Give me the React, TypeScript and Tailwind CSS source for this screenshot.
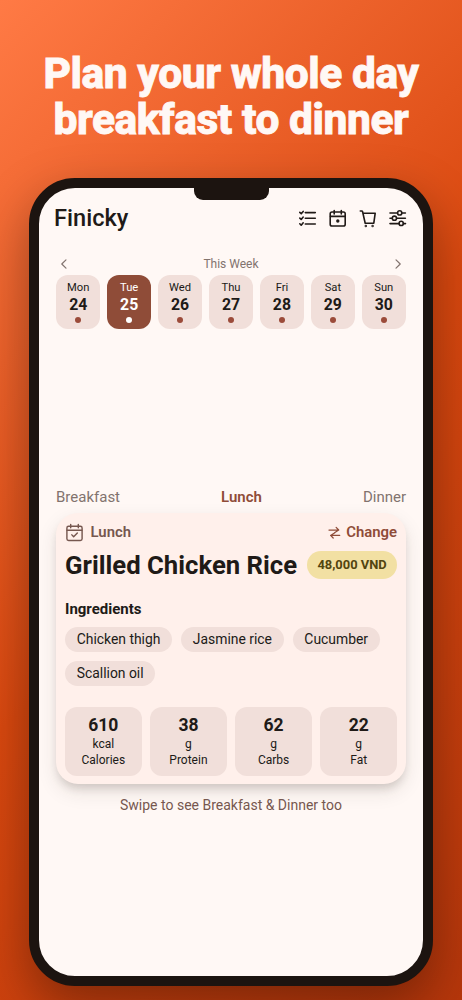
import React from "react";

const days = [
  ["Mon", 24], ["Tue", 25], ["Wed", 26], ["Thu", 27], ["Fri", 28], ["Sat", 29], ["Sun", 30],
] as const;

const nutrients = [
  ["610", "kcal", "Calories"],
  ["38", "g", "Protein"],
  ["62", "g", "Carbs"],
  ["22", "g", "Fat"],
];

const ingredients = ["Chicken thigh", "Jasmine rice", "Cucumber", "Scallion oil"];

function Icon({ size, children, width = 1.6 }: { size: number; width?: number; children: React.ReactNode }) {
  return (
    <svg width={size} height={size} viewBox="0 0 20 20" fill="none" stroke="currentColor" strokeWidth={width} strokeLinecap="round" strokeLinejoin="round" className="shrink-0">
      {children}
    </svg>
  );
}

const Checklist = () => (
  <Icon size={20}>
    <path d="M7.3 4.6h10M7.3 10.3h10M7.3 16h10M1.8 4.4l1.4 1.4 2-2.4M1.8 10.1l1.4 1.4 2-2.4M1.8 15.8l1.4 1.4 2-2.4" />
  </Icon>
);

const Calendar = () => (
  <Icon size={20}>
    <rect x="2.2" y="4" width="15" height="14" rx="1.8" />
    <path d="M2.5 8.4h14.5M6.2 2.6v3.4M13.3 2.6v3.4" />
    <circle cx="9.8" cy="13" r="0.9" fill="currentColor" />
  </Icon>
);

const Cart = () => (
  <Icon size={20}>
    <path d="M2.3 3h1.4q.7 0 .9.8l2.6 11.4h8.6l1.4-10H5" />
    <circle cx="7.8" cy="18" r="0.4" fill="currentColor" />
    <circle cx="14.6" cy="18" r="0.4" fill="currentColor" />
  </Icon>
);

const Sliders = () => (
  <Icon size={20}>
    <path d="M2 5h7.4M14 5h3.4M2 10.3h2.2M8.8 10.3h8.6M2 15.6h8.9M15.5 15.6h2" />
    <circle cx="11.7" cy="4.9" r="2.1" />
    <circle cx="6.4" cy="10.2" r="2.1" />
    <circle cx="13.2" cy="15.4" r="2.1" />
  </Icon>
);

export default function App() {
  return (
    <div className="flex h-[1000px] w-[462px] flex-col items-center overflow-hidden bg-[linear-gradient(135deg,#ff7a45_0%,#d9480f_50%,#b5360b_100%)] pt-[51px] font-['Roboto',sans-serif] text-[#201a17]">
      <h1 className="h-[127px] text-center text-[42.5px] leading-[46px] font-extrabold tracking-[-0.45px] whitespace-nowrap text-[#fff8f5] [-webkit-text-stroke:0.8px_#fff8f5]">
        Plan your whole day
        <br />
        breakfast to dinner
      </h1>

      <div className="relative flex h-[808px] w-[404px] shrink-0 flex-col rounded-[46px] border-[10px] border-[#1c1410] bg-[#fff8f5] shadow-[0_20px_50px_rgba(0,0,0,0.35)]">
        <div className="absolute top-[-1px] left-[155px] h-[13px] w-[75px] rounded-b-[9px] bg-[#1c1410]" />

        <header className="flex h-[60px] items-center justify-between pr-[15px] pl-[15px]">
          <span className="text-[23.6px] leading-[28px] font-medium">Finicky</span>
          <div className="flex gap-[10px]">
            <Checklist />
            <Calendar />
            <Cart />
            <Sliders />
          </div>
        </header>

        <div className="flex flex-col px-[17px]">
          <div className="mt-[9px] flex h-[14px] items-center justify-between px-[1.5px] text-[12px] text-[#82736e]">
            <Icon size={12} width={2}><path d="M13.3 3l-7 7 7 7" /></Icon>
            <span>This Week</span>
            <Icon size={12} width={2}><path d="M6.7 3l7 7-7 7" /></Icon>
          </div>

          <div className="mt-[4px] grid grid-cols-7 gap-[6.5px]">
            {days.map(([name, date]) => (
              <div
                key={name}
                className={
                  date === 25
                    ? "flex h-[54px] flex-col items-center rounded-[12px] bg-[#8f4c38] pt-[5.5px] text-white"
                    : "flex h-[54px] flex-col items-center rounded-[12px] bg-[#f1dfda] pt-[5.5px]"
                }
              >
                <span className="text-[11.2px] leading-[14px]">{name}</span>
                <span className="text-[15.8px] leading-[20px] font-bold">{date}</span>
                <span className={date === 25 ? "mt-[2.5px] size-[6px] rounded-full bg-white" : "mt-[2.5px] size-[6px] rounded-full bg-[#9b4b3a]"} />
              </div>
            ))}
          </div>

          <div className="mt-[158px] flex h-[20px] items-center justify-between text-[15px] text-[#82736e]">
            <span>Breakfast</span>
            <span className="font-semibold text-[#8f4c38]">Lunch</span>
            <span>Dinner</span>
          </div>

          <section className="mt-[6px] flex h-[271px] flex-col rounded-[22px] bg-[#fff0eb] px-[9px] pt-[8.5px] shadow-[0_6px_8px_-2px_rgba(50,35,30,0.16),0_8px_20px_rgba(50,35,30,0.10)]">
            <div className="flex h-[22px] items-center text-[14.9px] font-semibold">
              <div className="flex items-center gap-[6.5px] text-[#76574f]">
                <Icon size={19} width={1.5}>
                  <rect x="2" y="3.4" width="16" height="15" rx="1.8" />
                  <path d="M2.2 7.7h15.6M6 1.6v3.4M14 1.6v3.4M7.2 12.5l1.9 2 3.9-4" />
                </Icon>
                <span>Lunch</span>
              </div>
              <div className="ml-auto flex items-center gap-[5px] text-[#8f4c38]">
                <Icon size={13} width={1.9}>
                  <path d="M1.5 6.2h15M12.5 2.2l4 4L10 10.5M18 14.5H4M8 18.5l-4-4 6.5-4" />
                </Icon>
                <span>Change</span>
              </div>
            </div>

            <div className="mt-[6px] flex h-[30px] items-center justify-between">
              <h2 className="text-[25.7px] leading-[30px] font-bold whitespace-nowrap">Grilled Chicken Rice</h2>
              <span className="flex h-[28px] w-[90px] items-center justify-center rounded-full bg-[#f2e0a3] text-[12.9px] font-bold whitespace-nowrap text-[#53450f]">48,000 VND</span>
            </div>

            <h3 className="mt-[20.5px] text-[15px] leading-[18px] font-bold">Ingredients</h3>
            <div className="mt-[8.5px] flex flex-wrap gap-[9px]">
              {ingredients.map((item) => (
                <span key={item} className="flex h-[25px] items-center rounded-full bg-[#f1dfda] px-[11.7px] text-[13.9px]">{item}</span>
              ))}
            </div>

            <div className="mt-[21px] grid grid-cols-4 gap-[8.5px]">
              {nutrients.map(([value, unit, label]) => (
                <div key={label} className="flex h-[69px] flex-col items-center rounded-[12px] bg-[#f1dfda] pt-[7.5px]">
                  <span className="text-[17.5px] leading-[22px] font-bold">{value}</span>
                  <span className="text-[12px] leading-[16px]">{unit}</span>
                  <span className="text-[12px] leading-[16px]">{label}</span>
                </div>
              ))}
            </div>
          </section>

          <p className="mt-[12px] text-center text-[14px] leading-[18px] text-[#76574f]">Swipe to see Breakfast &amp; Dinner too</p>
        </div>
      </div>
    </div>
  );
}
